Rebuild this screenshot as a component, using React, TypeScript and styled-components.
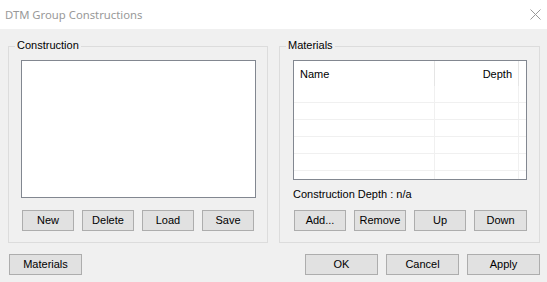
import React from "react";
import styled, { createGlobalStyle } from "styled-components";

const GlobalStyle = createGlobalStyle`
  html, body {
    margin: 0;
    padding: 0;
    background: #f0f0f0;
  }
`;

const Window = styled.div`
  width: 547px;
  height: 282px;
  background: #f0f0f0;
  display: flex;
  flex-direction: column;
  font-family: "Liberation Sans", Arial, sans-serif;
  font-size: 11px;
  color: #000;
  overflow: hidden;
`;

const TitleBar = styled.div`
  height: 29px;
  background: #fff;
  display: flex;
  align-items: center;
  justify-content: space-between;
  padding: 0 6px 0 5px;
`;

const Title = styled.span`
  font-family: "Noto Sans", "Open Sans", sans-serif;
  font-size: 11.3px;
  color: #999;
  margin-top: -1px;
`;

const Body = styled.div`
  padding: 17px 7px 0 8px;
  display: flex;
  flex-direction: column;
`;

const GroupsRow = styled.div`
  display: flex;
  gap: 11px;
`;

const Group = styled.div<{ $width: number }>`
  position: relative;
  width: ${(p) => p.$width}px;
  box-sizing: border-box;
  border: 1px solid #dcdcdc;
  padding: 13px 11px 11px ${(p) => (p.$width > 260 ? 13 : 12)}px;
  display: flex;
  flex-direction: column;
`;

const Legend = styled.span`
  position: absolute;
  top: -8px;
  left: 6px;
  padding: 0 2px;
  line-height: 13px;
  background: #f0f0f0;
`;

const ListBox = styled.div`
  width: 235px;
  height: 138px;
  box-sizing: border-box;
  border: 1px solid #828790;
  background: #fff;
`;

const ListView = styled.div`
  width: 234px;
  height: 120px;
  box-sizing: border-box;
  border: 1px solid #828790;
  background: #fff;
  display: grid;
  grid-template-columns: 141px 84px 1fr;
  grid-auto-rows: 17px;
  grid-template-rows: 25px;
  overflow: hidden;
`;

const HeadCell = styled.div<{ $right?: boolean }>`
  border-right: 1px solid #e5e5e5;
  display: flex;
  align-items: center;
  justify-content: ${(p) => (p.$right ? "flex-end" : "flex-start")};
  padding: 0 6px 0 6px;
`;

const HeadFiller = styled.div``;

const Cell = styled.div<{ $last?: boolean }>`
  border-bottom: 1px solid #f0f0f0;
  border-right: ${(p) => (p.$last ? "none" : "1px solid #f0f0f0")};
`;

const InfoText = styled.div`
  margin-top: 8px;
  line-height: 13px;
  height: 13px;
`;

const ButtonRow = styled.div<{ $top: number; $pad?: number }>`
  display: flex;
  gap: 8px;
  margin-top: ${(p) => p.$top}px;
  padding-left: ${(p) => p.$pad ?? 0}px;
`;

const Button = styled.button<{ $w?: number }>`
  width: ${(p) => p.$w ?? 52}px;
  height: 21px;
  box-sizing: border-box;
  border: 1px solid #adadad;
  background: #e1e1e1;
  font-family: "Liberation Sans", Arial, sans-serif;
  font-size: 11px;
  color: #000;
  padding: 0;
  margin: 0;
  line-height: 19px;
`;

const BottomBar = styled.div`
  display: flex;
  justify-content: space-between;
  margin-top: 11px;
  padding-left: 1px;
`;

const CloseIcon = () => (
  <svg width="11" height="11" viewBox="0 0 11 11">
    <path d="M0.5 0.5 L10.5 10.5 M10.5 0.5 L0.5 10.5" stroke="#9a9a9a" strokeWidth="1" fill="none" />
  </svg>
);

const rows = [0, 1, 2, 3, 4, 5];

export default function App() {
  return (
    <>
      <GlobalStyle />
      <Window>
        <TitleBar>
          <Title>DTM Group Constructions</Title>
          <CloseIcon />
        </TitleBar>
        <Body>
          <GroupsRow>
            <Group $width={260}>
              <Legend>Construction</Legend>
              <ListBox />
              <ButtonRow $top={12} $pad={1}>
                <Button>New</Button>
                <Button>Delete</Button>
                <Button>Load</Button>
                <Button>Save</Button>
              </ButtonRow>
            </Group>
            <Group $width={261}>
              <Legend>Materials</Legend>
              <ListView>
                <HeadCell>Name</HeadCell>
                <HeadCell $right>Depth</HeadCell>
                <HeadFiller />
                {rows.map((r) => (
                  <React.Fragment key={r}>
                    <Cell />
                    <Cell />
                    <Cell $last />
                  </React.Fragment>
                ))}
              </ListView>
              <InfoText>Construction Depth : n/a</InfoText>
              <ButtonRow $top={9} $pad={1}>
                <Button>Add...</Button>
                <Button>Remove</Button>
                <Button>Up</Button>
                <Button $w={53}>Down</Button>
              </ButtonRow>
            </Group>
          </GroupsRow>
          <BottomBar>
            <Button $w={73}>Materials</Button>
            <ButtonRow $top={0}>
              <Button $w={73}>OK</Button>
              <Button $w={73}>Cancel</Button>
              <Button $w={73}>Apply</Button>
            </ButtonRow>
          </BottomBar>
        </Body>
      </Window>
    </>
  );
}
